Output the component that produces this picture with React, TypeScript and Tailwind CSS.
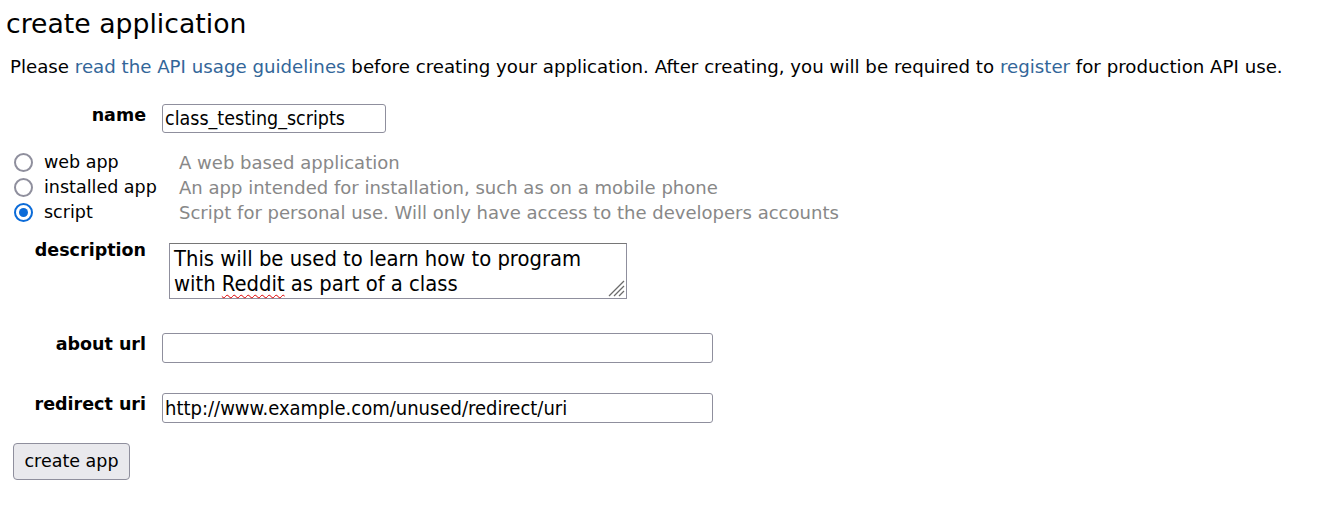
import React from "react";

const verdana = { fontFamily: '"DejaVu Sans", Verdana, sans-serif' };
const tahoma = { fontFamily: '"DejaVu Sans Condensed", Tahoma, sans-serif' };

function Radio({ checked }: { checked?: boolean }) {
  return checked ? (
    <span className="flex h-[19px] w-[19px] items-center justify-center rounded-full border-[2.5px] border-[#0b6bd8]">
      <span className="h-[9px] w-[9px] rounded-full bg-[#0b6bd8]" />
    </span>
  ) : (
    <span className="h-[19px] w-[19px] rounded-full border-[2.5px] border-[#8f8f9d] bg-white" />
  );
}

export default function App() {
  return (
    <div className="min-h-[513px] bg-white text-black" style={verdana}>
      <h1 className="pl-[6px] pt-[6px] text-[26.7px] leading-[36px] font-normal">create application</h1>
      <p className="mt-[14px] pl-[10px] text-[18.2px] leading-[22px]">
        Please <span className="text-[#336699]">read the API usage guidelines</span> before creating your
        application. After creating, you will be required to <span className="text-[#336699]">register</span> for
        production API use.
      </p>

      <div className="mt-[26px] flex items-start">
        <div className="w-[146px] text-right text-[17.5px] font-bold leading-[22px]">name</div>
        <div
          className="ml-[16px] h-[29px] w-[224px] rounded-[3px] border border-[#8f8f9d] px-[2px] text-[19.5px] leading-[28px]"
          style={tahoma}
        >
          class_testing_scripts
        </div>
      </div>

      <div className="mt-[17px] flex flex-col pl-[14px] text-[17.5px] leading-[25px]">
        {[
          ["web app", "A web based application", false],
          ["installed app", "An app intended for installation, such as on a mobile phone", false],
          ["script", "Script for personal use. Will only have access to the developers accounts", true],
        ].map(([label, desc, checked]) => (
          <div key={label as string} className="flex h-[25px] items-center">
            <Radio checked={checked as boolean} />
            <span className="ml-[11px] w-[135px]">{label as string}</span>
            <span className="text-[18.05px] text-[#888888]">{desc as string}</span>
          </div>
        ))}
      </div>

      <div className="mt-[18px] flex items-start">
        <div className="mt-[-4px] w-[146px] text-right text-[17.5px] font-bold leading-[22px]">description</div>
        <div
          className="relative ml-[23px] h-[56px] w-[458px] border border-[#8f8f9d] border-t-[#767676] px-[4px] pt-[2px] text-[21.8px] leading-[25px]"
          style={tahoma}
        >
          This will be used to learn how to program
          <br />
          with <span className="underline decoration-wavy decoration-[#dd0000] decoration-1 underline-offset-[3px]">Reddit</span> as part of a class
          <svg className="absolute bottom-[1px] right-[1px]" width="20" height="20" viewBox="0 0 20 20">
            <g stroke="#6b6b6b" strokeWidth="1.2">
              <line x1="19" y1="4" x2="4" y2="19" />
              <line x1="19" y1="9" x2="9" y2="19" />
              <line x1="19" y1="14" x2="14" y2="19" />
            </g>
          </svg>
        </div>
      </div>

      <div className="mt-[34px] flex items-start">
        <div className="w-[146px] text-right text-[17.5px] font-bold leading-[22px]">about url</div>
        <div className="ml-[16px] h-[30px] w-[551px] rounded-[3px] border border-[#8f8f9d]" />
      </div>

      <div className="mt-[30px] flex items-start">
        <div className="w-[146px] text-right text-[17.5px] font-bold leading-[22px]">redirect uri</div>
        <div
          className="ml-[16px] h-[30px] w-[551px] rounded-[3px] border border-[#8f8f9d] px-[2px] text-[20px] leading-[28px]"
          style={tahoma}
        >
          http://www.example.com/unused/redirect/uri
        </div>
      </div>

      <div className="mt-[20px] pl-[13px]">
        <button className="h-[37px] w-[117px] rounded-[4px] border border-[#8f8f9d] bg-[#e9e9ed] text-[17.5px]" style={verdana}>
          create app
        </button>
      </div>
    </div>
  );
}
